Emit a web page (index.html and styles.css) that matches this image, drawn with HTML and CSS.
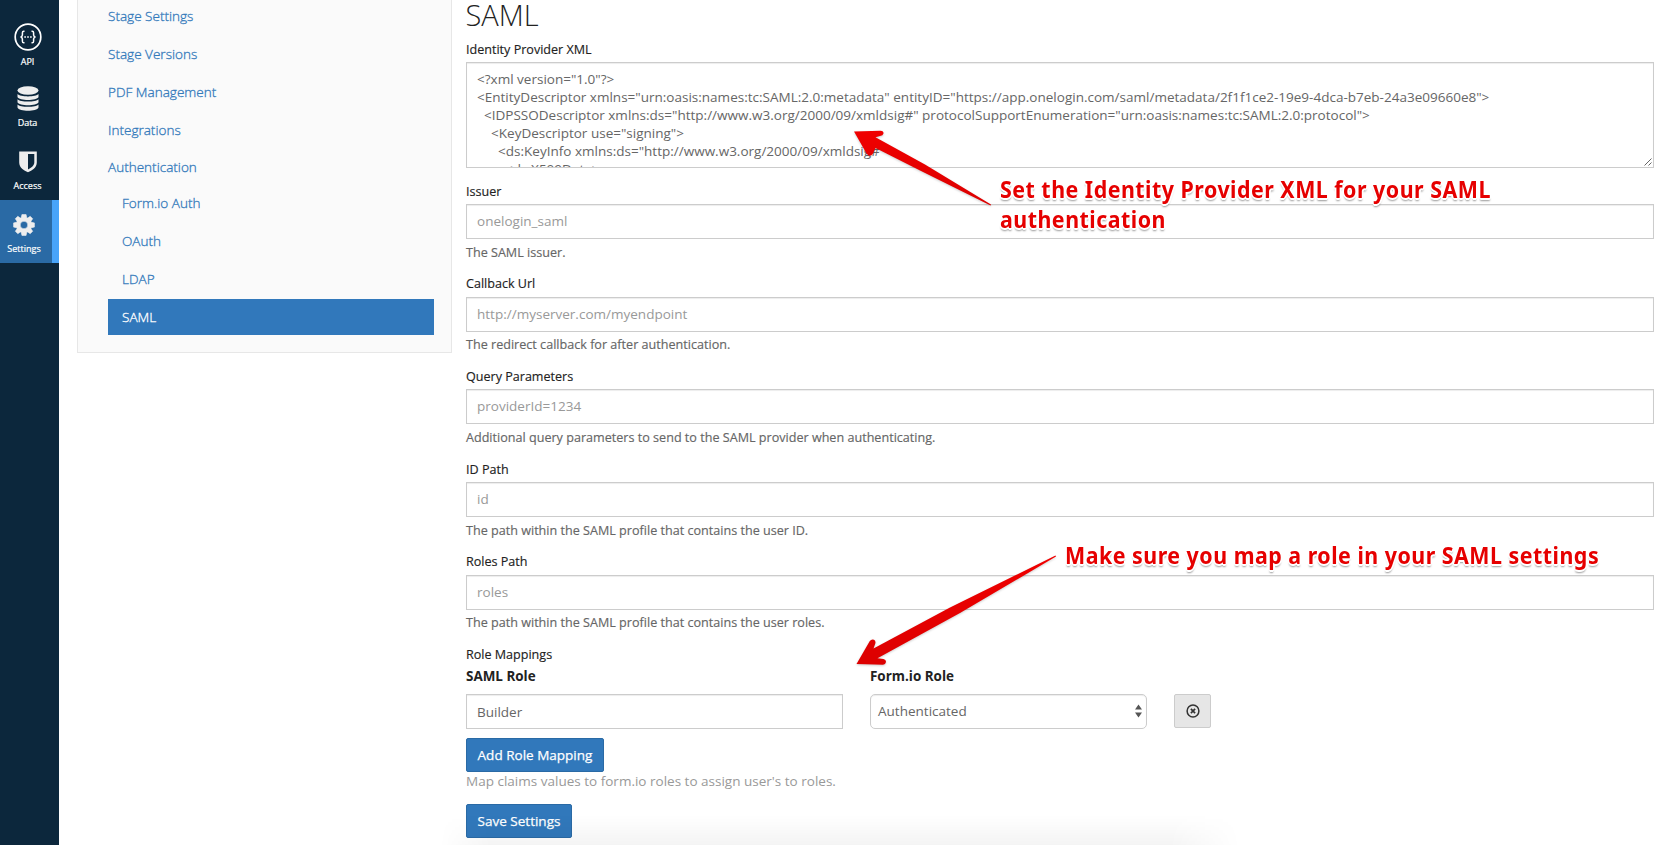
FILE: index.html
```html
<!DOCTYPE html>
<html lang="en">
<head>
<meta charset="utf-8">
<title>SAML Settings</title>
<link rel="stylesheet" href="styles.css">
</head>
<body>
<div class="app">
  <nav class="rail">
    <a class="rail-item rail-item-api">
      <svg class="rail-icon" width="28" height="28" viewBox="0 0 28 28" fill="none" stroke="#fff"><circle cx="14" cy="14" r="12.8" stroke-width="1.7"/><path d="M10.5 8.2H9.8Q8.400 8.200 8.400 9.800V12Q8.400 13.600 6.600 14Q8.400 14.400 8.400 16V18.200Q8.400 19.800 9.800 19.800H10.500M17.500 8.200H18.200Q19.600 8.200 19.600 9.800V12Q19.600 13.600 21.400 14Q19.600 14.400 19.600 16V18.200Q19.600 19.800 18.200 19.800H17.500" stroke-width="1.5"/><path d="M10.300 14H11.900M13.200 14H14.800M16.100 14H17.700" stroke-width="1.5"/></svg>
      <span>API</span>
    </a>
    <a class="rail-item rail-item-data">
      <svg class="rail-icon" width="22" height="26" viewBox="0 0 22 26" fill="#eee"><ellipse cx="11" cy="4.5" rx="10.5" ry="4.2"/><path d="M.5 8C3 11.2 19 11.2 21.500 8V11.100C20 15 2 15 .5 11.100ZM.5 13.200C3 16.400 19 16.400 21.500 13.200V16.300C20 20.200 2 20.200 .5 16.300ZM.5 18.400C3 21.600 19 21.600 21.500 18.400V21.500C20 25.800 2 25.800 .5 21.500Z"/></svg>
      <span>Data</span>
    </a>
    <a class="rail-item rail-item-access">
      <svg class="rail-icon" width="18" height="22" viewBox="0 0 18 22"><path fill="#eee" fill-rule="evenodd" d="M.2 .6H17.800V11.500C17.800 16.500 13 19.700 9 21.300C5 19.700 .2 16.500 .2 11.500ZM9 3V18.400C12.500 16.700 15.300 14.400 15.300 11.500V3Z"/></svg>
      <span>Access</span>
    </a>
    <a class="rail-item rail-item-active">
      <svg class="rail-icon" width="22" height="22" viewBox="0 0 22 22"><path fill="#eee" fill-rule="evenodd" stroke="#eee" stroke-width=".6" stroke-linejoin="round" d="M8.300 3.500L8.900 .6H13.100L13.700 3.500L14.700 4.100L17.200 2.300L19.700 4.800L17.900 7.300L18.500 8.300L21.400 8.900V13.100L18.500 13.700L17.900 14.700L19.700 17.200L17.200 19.700L14.700 17.900L13.700 18.500L13.100 21.400H8.900L8.300 18.500L7.300 17.900L4.800 19.700L2.300 17.200L4.100 14.700L3.500 13.700L.6 13.100V8.900L3.500 8.300L4.100 7.300L2.300 4.800L4.800 2.300L7.300 4.100ZM11 7.200A3.800 3.800 0 1 0 11 14.800A3.800 3.800 0 1 0 11 7.200Z"/></svg>
      <span>Settings</span>
    </a>
  </nav>

  <aside class="side-panel">
    <a class="side-link">Stage Settings</a>
    <a class="side-link">Stage Versions</a>
    <a class="side-link">PDF Management</a>
    <a class="side-link">Integrations</a>
    <a class="side-link side-link-parent">Authentication</a>
    <a class="side-link side-link-sub">Form.io Auth</a>
    <a class="side-link side-link-sub">OAuth</a>
    <a class="side-link side-link-sub">LDAP</a>
    <a class="side-link side-link-sub side-link-current">SAML</a>
  </aside>

  <main class="content">
    <h2 class="title">SAML</h2>
    <div class="xml-group">
      <label class="label">Identity Provider XML</label>
      <div class="control xml-box"><pre class="xml-text">&lt;?xml version="1.0"?&gt;
&lt;EntityDescriptor xmlns="urn:oasis:names:tc:SAML:2.0:metadata" entityID="https://app.onelogin.com/saml/metadata/2f1f1ce2-19e9-4dca-b7eb-24a3e09660e8"&gt;
  &lt;IDPSSODescriptor xmlns:ds="http://www.w3.org/2000/09/xmldsig#" protocolSupportEnumeration="urn:oasis:names:tc:SAML:2.0:protocol"&gt;
    &lt;KeyDescriptor use="signing"&gt;
      &lt;ds:KeyInfo xmlns:ds="http://www.w3.org/2000/09/xmldsig#
        &lt;ds:X509Data&gt;</pre><svg class="grip" width="8" height="8" viewBox="0 0 8 8" stroke="#666" stroke-width="1"><path d="M.5 7.500L7.500 .5M4.500 7.500L7.500 4.500"/></svg></div>
    </div>
    <div class="field"><label class="label">Issuer</label><div class="control input">onelogin_saml</div><p class="help">The SAML issuer.</p></div>
    <div class="field"><label class="label">Callback Url</label><div class="control input">http://myserver.com/myendpoint</div><p class="help">The redirect callback for after authentication.</p></div>
    <div class="field"><label class="label">Query Parameters</label><div class="control input">providerId=1234</div><p class="help">Additional query parameters to send to the SAML provider when authenticating.</p></div>
    <div class="field"><label class="label">ID Path</label><div class="control input">id</div><p class="help">The path within the SAML profile that contains the user ID.</p></div>
    <div class="field"><label class="label">Roles Path</label><div class="control input">roles</div><p class="help">The path within the SAML profile that contains the user roles.</p></div>
    <label class="label mapping-label">Role Mappings</label>
    <div class="mapping">
      <strong class="mapping-head">SAML Role</strong>
      <strong class="mapping-head">Form.io Role</strong>
      <span></span>
      <div class="control input filled">Builder</div>
      <div class="control select">Authenticated<svg width="7" height="14" viewBox="0 0 7 14" fill="#555"><path d="M0 5.500L3.500 .5L7 5.500ZM0 8.500H7L3.500 13.500Z"/></svg></div>
      <button class="remove"><svg width="14" height="14" viewBox="0 0 14 14" fill="none" stroke="#333"><circle cx="7" cy="7" r="5.900" stroke-width="1.500"/><path d="M4.900 4.900L9.100 9.100M9.100 4.900L4.900 9.100" stroke-width="1.700"/></svg></button>
    </div>
    <button class="btn btn-add">Add Role Mapping</button>
    <p class="hint">Map claims values to form.io roles to assign user's to roles.</p>
    <button class="btn btn-save">Save Settings</button>
  </main>
</div>
<div class="bottom-shade"></div>
<svg class="arrows" width="1663" height="845" viewBox="0 0 1663 845">
  <defs><linearGradient id="red" x1="0" y1="0" x2="0" y2="1"><stop offset="0" stop-color="#f00000"/><stop offset="1" stop-color="#dc0000"/></linearGradient></defs>
  <path fill="url(#red)" d="M854 131.500L880.500 130.700Q883.800 131 883.500 133.500Q883 135.800 880 136L875.500 137.300L925 164.500L991 204.600L990.500 205.500L920 170.500L875.500 148L873 153.500Q871 156.500 868.500 155.500L866.500 153.500Z"/>
  <path fill="url(#red)" d="M856.500 664L869.800 641Q871.500 638.800 874 639.800Q876 641 875.300 643.500L873.500 648.500L950 607.500L1055.500 555.500L1056 556.500L960 613L877.500 658.300L883.500 658.900Q886.200 659.500 886 662Q885.500 664.500 883 664.700Z"/>
</svg>
<p class="callout callout-xml">Set the Identity Provider XML for your SAML<br>authentication</p>
<p class="callout callout-role">Make sure you map a role in your SAML settings</p>
</body>
</html>
```
FILE: styles.css
```css
* { box-sizing: border-box; }
body { margin: 0; background: #fff; font-family: "Open Sans", "Noto Sans", sans-serif; color: #222; overflow: hidden; }
p, h2, pre { margin: 0; }
.app { display: flex; height: 845px; align-items: flex-start; }

.rail { width: 59px; height: 845px; flex: none; background: #0c273c; padding-top: 11px; }
.rail-item { display: flex; flex-direction: column; align-items: center; justify-content: flex-end; height: 63px; padding: 0 4px 7px 0; color: #fff; font-size: 9px; line-height: 14px; -webkit-text-stroke: .2px; }
.rail-item-api { height: 65px; }
.rail-item-data { height: 61px; }
.rail-icon { display: block; margin-bottom: 4px; }
.rail-item-access .rail-icon, .rail-item-active .rail-icon { margin-bottom: 6px; }
.rail-item-active { background: #2a6aa5; border-right: 7px solid #48a4fa; }

.side-panel { width: 375px; height: 353px; flex: none; margin-left: 18px; padding: 0 17px 0 30px; background: #fafafa; border: 1px solid #e7e7e7; border-top: 0; }
.side-link { display: block; height: 38px; line-height: 37px; color: #3279ba; font-size: 13.55px; font-weight: 300; -webkit-text-stroke: .3px; }
.side-link:first-child { margin-top: -2px; }
.side-link-parent { height: 35px; line-height: 35px; }
.side-link-sub { padding-left: 14px; }
.side-link-current { height: 36px; background: #3178bb; color: #fff; }

.content { width: 1188px; margin-left: 14px; }
.title { height: 39px; line-height: 29px; font-size: 29px; font-weight: 300; text-indent: -.5px; }
.label { display: block; height: 23px; padding-top: .5px; line-height: 20px; font-size: 12.57px; color: #222; -webkit-text-stroke: .15px; }
.control { border: 1px solid #ccc; background: #fff; box-shadow: inset 0 1px 1px rgba(0,0,0,.075); font-size: 13.52px; color: #666; }
.xml-group { height: 142px; }
.xml-box { position: relative; height: 106px; padding: 7px 10px 0; overflow: hidden; }
.xml-text { font: inherit; line-height: 18px; }
.grip { position: absolute; right: 1px; bottom: 1px; }
.field { height: 92.7px; }
.input { height: 35px; padding: 0 10px; line-height: 33px; color: #999; }
.filled { color: #666; line-height: 34px; }
.help { margin-top: 3.5px; font-size: 12.6px; line-height: 20px; color: #666; -webkit-text-stroke: .15px; }
.mapping-label { height: 21px; }
.mapping { display: grid; grid-template-columns: 377px 277px 37px; column-gap: 27px; grid-template-rows: 28.5px 35px; }
.mapping-head { font-size: 13.45px; line-height: 22px; }
.select { display: flex; align-items: center; justify-content: space-between; padding: 0 4px 1px 7px; border-radius: 5px; }
.remove { display: flex; align-items: center; justify-content: center; height: 34px; padding: 0; background: #e6e6e6; border: 1px solid #ccc; border-radius: 2px; }
.btn { display: block; height: 34px; padding: 0; font: 13.52px "Open Sans", sans-serif; color: #fff; background: #3178bb; border: 1px solid #2a6aa5; border-radius: 2px; -webkit-text-stroke: .25px; }
.btn-add { width: 138px; margin-top: 9px; }
.hint { height: 32px; line-height: 19px; font-size: 13.52px; color: #999; }
.btn-save { width: 106px; }

.bottom-shade { position: absolute; left: 440px; top: 815px; width: 800px; height: 30px; background: linear-gradient(transparent, rgba(0,0,0,.045)); pointer-events: none; -webkit-mask-image: linear-gradient(90deg, transparent, #000 50px, #000 730px, transparent); mask-image: linear-gradient(90deg, transparent, #000 50px, #000 730px, transparent); }
.arrows { position: absolute; left: 0; top: 0; filter: drop-shadow(0 1px 1px rgba(0,0,0,.2)); }
.callout { position: absolute; font: bold 23px/30px "Noto Sans", sans-serif; letter-spacing: .53px; transform: scaleX(.93); transform-origin: 0 0; color: #e60000; white-space: nowrap; text-shadow: 2px 0 #fff, -2px 0 #fff, 0 2px #fff, 0 -2px #fff, 1px 1px #fff, -1px 1px #fff, 0 3px 2px rgba(0,0,0,.4); }
.callout-xml { left: 1000px; top: 174px; }
.callout-role { left: 1065px; top: 540px; }
```
